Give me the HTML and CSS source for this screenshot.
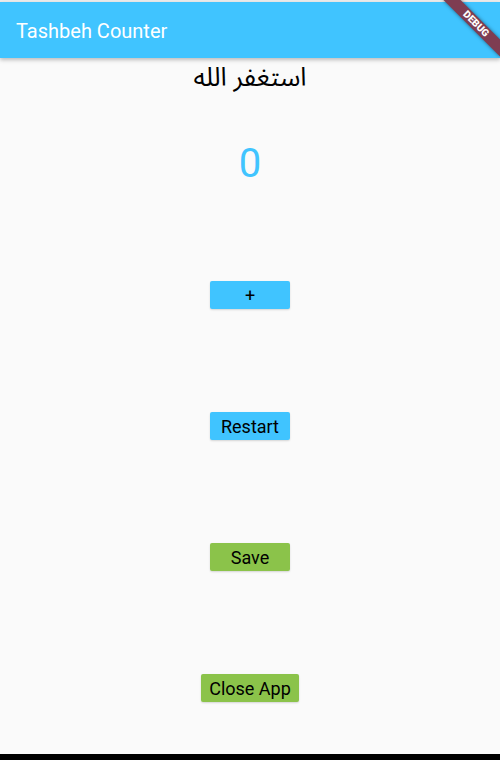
FILE: index.html
```html
<!DOCTYPE html>
<html>
<head>
<meta charset="utf-8">
<link rel="stylesheet" href="styles.css">
</head>
<body>
<div class="screen">
  <div class="status"></div>
  <header class="appbar"><span class="title">Tashbeh Counter</span></header>
  <main class="content">
    <div class="zikr" dir="rtl">استغفر الله</div>
    <div class="count">0</div>
    <button class="btn blue first">+</button>
    <button class="btn blue">Restart</button>
    <button class="btn green">Save</button>
    <button class="btn green">Close App</button>
  </main>
  <div class="navbar"></div>
  <div class="banner">DEBUG</div>
</div>
</body>
</html>
```
FILE: styles.css
```css
* { box-sizing: border-box; }
html, body { margin: 0; padding: 0; }
body { width: 500px; height: 760px; overflow: hidden; background: #fafafa; font-family: Roboto, "Liberation Sans", sans-serif; }
.screen { position: relative; width: 500px; height: 760px; display: flex; flex-direction: column; overflow: hidden; }
.status { height: 2px; background: #ececec; flex: none; }
.appbar { height: 56px; flex: none; background: #40c4ff; display: flex; align-items: center; padding-left: 16px; padding-top: 2px; box-shadow: 0 2px 4px rgba(0,0,0,0.25); position: relative; z-index: 1; }
.title { color: #fff; font-size: 20px; font-weight: 400; }
.content { flex: 1; display: flex; flex-direction: column; align-items: center; }
.zikr { height: 40px; line-height: 40px; font-size: 26px; color: #000; font-family: "Noto Sans Arabic", "DejaVu Sans", sans-serif; }
.count { margin-top: 41px; height: 48px; line-height: 50px; font-size: 40px; color: #40c4ff; }
.btn { border: none; border-radius: 2px; min-width: 80px; height: 28px; padding: 1px 8px 0; font-family: Roboto, sans-serif; font-size: 18px; color: #000; margin-top: 103px; box-shadow: 0 1px 2px rgba(0,0,0,0.15); line-height: 27px; }
.btn.first { margin-top: 94px; }
.blue { background: #40c4ff; }
.green { background: #8bc34a; }
.navbar { height: 6px; flex: none; background: #000; }
.banner { position: absolute; left: 436px; top: 18px; width: 80px; height: 12px; line-height: 12px; text-align: center; transform: rotate(45deg); background: #7e3d52; color: #fff; font-size: 10px; font-weight: 900; font-family: Roboto, sans-serif; box-shadow: 0 0 4px rgba(0,0,0,0.5); z-index: 2; }
```
